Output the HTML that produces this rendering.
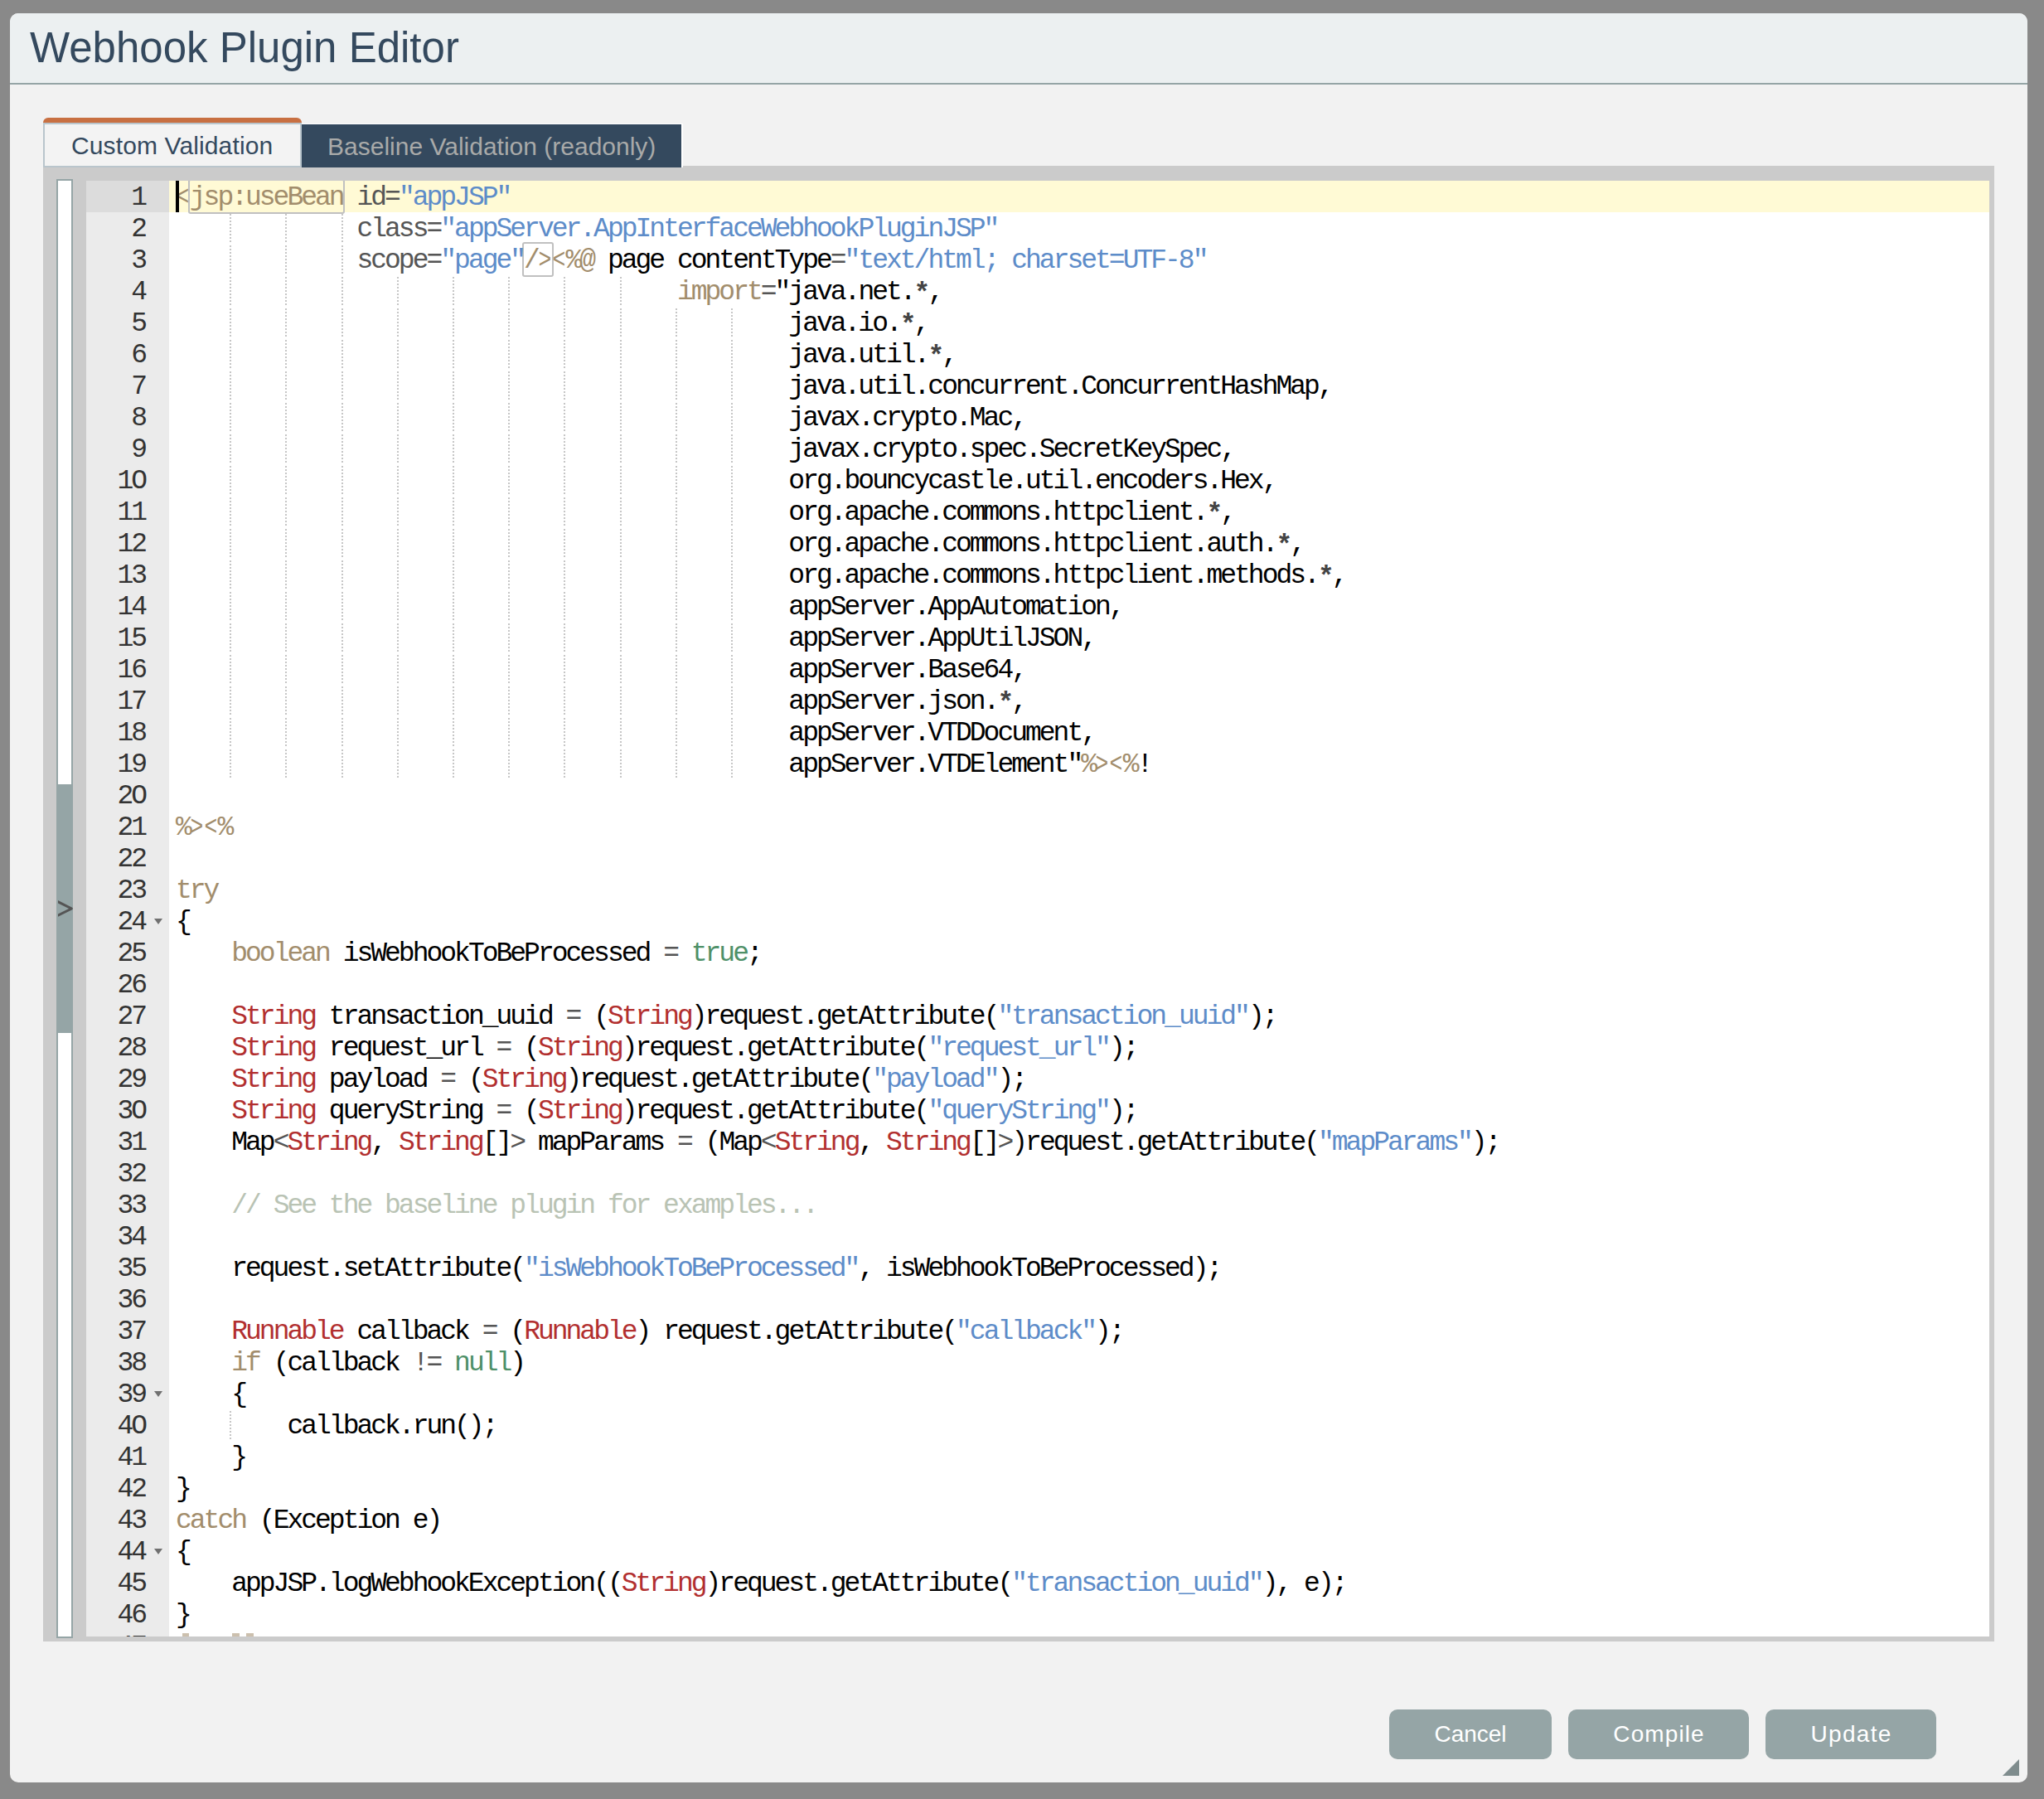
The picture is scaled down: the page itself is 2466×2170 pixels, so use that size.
<!DOCTYPE html>
<html><head><meta charset="utf-8"><title>Webhook Plugin Editor</title>
<style>
html,body{margin:0;padding:0}
body{width:2466px;height:2170px;background:#898989;position:relative;overflow:hidden;font-family:"Liberation Sans",sans-serif}
.abs{position:absolute}
#dlg{position:absolute;left:12px;top:16px;width:2434px;height:2134px;border-radius:10px;background:#f2f2f2;overflow:hidden}
#titlebar{position:absolute;left:0;top:0;width:2434px;height:84px;background:#ecf0f1;border-bottom:2px solid #95a5a6}
#title{position:absolute;left:24px;top:16px;font-size:51px;line-height:51px;color:#34495e;white-space:nowrap}
#tab1o{position:absolute;left:52px;top:142px;width:312px;height:60px;background:#c87042;border-radius:6px 6px 0 0;z-index:3}
#tab1i{position:absolute;left:0;top:6px;width:312px;height:54px;box-sizing:border-box;border:2px solid #b9c5cc;background:#f3f3f3}
#tab2{position:absolute;left:364px;top:149px;width:460px;height:53px;box-sizing:border-box;border-top:1px solid #fff;border-right:2px solid #fff;background:#34495e;z-index:2}
.tabt{position:absolute;font-size:30px;line-height:30px;white-space:nowrap}
#cont{position:absolute;left:52px;top:200px;width:2354px;height:1780px;background:#cbcbcb;z-index:1}
#split{position:absolute;left:68px;top:216px;width:20px;height:1760px;box-sizing:border-box;border:2px solid #95a5a6;background:#fff;z-index:2}
#splitfill{position:absolute;left:68px;top:946px;width:20px;height:300px;background:#95a5a6;z-index:3}
#arrow{position:absolute;left:68px;top:1082px;z-index:4}
#ed{position:absolute;left:104px;top:218px;width:2296px;height:1756px;overflow:hidden;background:#fff;z-index:2}
#gutter{position:absolute;left:0;top:0;width:100px;height:1756px;background:#ebebeb}
#gact{position:absolute;left:0;top:0;width:100px;height:38px;background:#dcdcdc}
.gc{position:absolute;left:0;width:71px;height:38px;padding-top:2px;text-align:right;font-family:"Liberation Mono",monospace;font-size:33px;line-height:38px;letter-spacing:-3px;color:#333}
.fw{position:absolute;left:82px;top:15.7px;width:0;height:0;border-left:5px solid transparent;border-right:5px solid transparent;border-top:7px solid #707070}
#content{position:absolute;left:100px;top:0;width:2196px;height:1756px;background:#fff}
#lact{position:absolute;left:0;top:0;width:2196px;height:38px;background:#fffad5}
.gd{position:absolute;width:2px;height:38px;background:repeating-linear-gradient(to bottom,transparent 0,transparent 2px,#c6c6c6 2px,#c6c6c6 4px)}
.brk{position:absolute;box-sizing:border-box;border:2px solid #c0c0c0;border-radius:3px}
#cursor{position:absolute;left:8px;top:0;width:4px;height:38px;background:#000;z-index:5}
.ln{position:absolute;left:8px;height:38px;font-family:"Liberation Mono",monospace;font-size:33px;line-height:38px;letter-spacing:-3px;white-space:pre;color:#000}
.t{color:#a28d6c}
.nar{display:inline-block;width:16.8px;letter-spacing:0;font-style:normal;text-indent:-1.5px;transform:scaleX(.8)}
.g{color:#555}
.s{color:#444;font-weight:bold;position:relative;top:2px}
.b{color:#5d8cc9}
.r{color:#b22f2f}
.n{color:#4e9068}
.c{color:#b9c3b4}
.btn{position:absolute;top:2046px;height:60px;border-radius:10px;background:#95a5a6;color:#fff;font-size:28px;line-height:60px;text-align:center;white-space:nowrap}
#grip{position:absolute;left:2404px;top:2106px;width:0;height:0;border-left:20px solid transparent;border-bottom:20px solid #7f8c8d}
</style></head>
<body>
<div id="dlg">
  <div id="titlebar"></div>
  <div id="title">Webhook Plugin Editor</div>
  <div class="btn" style="left:1664px;width:196px">Cancel</div>
  <div class="btn" style="left:1880px;width:218px;letter-spacing:1.1px;text-indent:1.1px">Compile</div>
  <div class="btn" style="left:2118px;width:206px;letter-spacing:1.3px;text-indent:1.3px">Update</div>
  <div id="grip"></div>
</div>
<div id="cont"></div>
<div id="tab1o"><div id="tab1i"></div><span class="tabt" id="t1" style="left:34px;top:19px;color:#34495e;letter-spacing:0.12px">Custom Validation</span></div>
<div id="tab2"><span class="tabt" id="t2" style="left:31px;top:12px;color:#a9aaa9">Baseline Validation (readonly)</span></div>
<div id="split"></div>
<div id="splitfill"></div>
<svg id="arrow" width="22" height="28" viewBox="0 0 22 28"><polygon points="2,4.1 19.2,12.7 20,13.95 19.2,15.2 2,23.8 2,20.5 15.1,13.95 2,7.4" fill="#555"/></svg>
<div id="ed">
  <div id="gutter">
    <div id="gact"></div>
<div class="gc" style="top:0px">1</div>
<div class="gc" style="top:38px">2</div>
<div class="gc" style="top:76px">3</div>
<div class="gc" style="top:114px">4</div>
<div class="gc" style="top:152px">5</div>
<div class="gc" style="top:190px">6</div>
<div class="gc" style="top:228px">7</div>
<div class="gc" style="top:266px">8</div>
<div class="gc" style="top:304px">9</div>
<div class="gc" style="top:342px">1O</div>
<div class="gc" style="top:380px">11</div>
<div class="gc" style="top:418px">12</div>
<div class="gc" style="top:456px">13</div>
<div class="gc" style="top:494px">14</div>
<div class="gc" style="top:532px">15</div>
<div class="gc" style="top:570px">16</div>
<div class="gc" style="top:608px">17</div>
<div class="gc" style="top:646px">18</div>
<div class="gc" style="top:684px">19</div>
<div class="gc" style="top:722px">2O</div>
<div class="gc" style="top:760px">21</div>
<div class="gc" style="top:798px">22</div>
<div class="gc" style="top:836px">23</div>
<div class="gc" style="top:874px">24<i class="fw"></i></div>
<div class="gc" style="top:912px">25</div>
<div class="gc" style="top:950px">26</div>
<div class="gc" style="top:988px">27</div>
<div class="gc" style="top:1026px">28</div>
<div class="gc" style="top:1064px">29</div>
<div class="gc" style="top:1102px">3O</div>
<div class="gc" style="top:1140px">31</div>
<div class="gc" style="top:1178px">32</div>
<div class="gc" style="top:1216px">33</div>
<div class="gc" style="top:1254px">34</div>
<div class="gc" style="top:1292px">35</div>
<div class="gc" style="top:1330px">36</div>
<div class="gc" style="top:1368px">37</div>
<div class="gc" style="top:1406px">38</div>
<div class="gc" style="top:1444px">39<i class="fw"></i></div>
<div class="gc" style="top:1482px">4O</div>
<div class="gc" style="top:1520px">41</div>
<div class="gc" style="top:1558px">42</div>
<div class="gc" style="top:1596px">43</div>
<div class="gc" style="top:1634px">44<i class="fw"></i></div>
<div class="gc" style="top:1672px">45</div>
<div class="gc" style="top:1710px">46</div>
<div class="gc" style="top:1748px">47</div>
  </div>
  <div id="content">
    <div id="lact"></div>
<div class="gd" style="left:73.2px;top:38px"></div>
<div class="gd" style="left:140.4px;top:38px"></div>
<div class="gd" style="left:207.6px;top:38px"></div>
<div class="gd" style="left:73.2px;top:76px"></div>
<div class="gd" style="left:140.4px;top:76px"></div>
<div class="gd" style="left:207.6px;top:76px"></div>
<div class="gd" style="left:73.2px;top:114px"></div>
<div class="gd" style="left:140.4px;top:114px"></div>
<div class="gd" style="left:207.6px;top:114px"></div>
<div class="gd" style="left:274.8px;top:114px"></div>
<div class="gd" style="left:342.0px;top:114px"></div>
<div class="gd" style="left:409.2px;top:114px"></div>
<div class="gd" style="left:476.4px;top:114px"></div>
<div class="gd" style="left:543.6px;top:114px"></div>
<div class="gd" style="left:73.2px;top:152px"></div>
<div class="gd" style="left:140.4px;top:152px"></div>
<div class="gd" style="left:207.6px;top:152px"></div>
<div class="gd" style="left:274.8px;top:152px"></div>
<div class="gd" style="left:342.0px;top:152px"></div>
<div class="gd" style="left:409.2px;top:152px"></div>
<div class="gd" style="left:476.4px;top:152px"></div>
<div class="gd" style="left:543.6px;top:152px"></div>
<div class="gd" style="left:610.8px;top:152px"></div>
<div class="gd" style="left:678.0px;top:152px"></div>
<div class="gd" style="left:73.2px;top:190px"></div>
<div class="gd" style="left:140.4px;top:190px"></div>
<div class="gd" style="left:207.6px;top:190px"></div>
<div class="gd" style="left:274.8px;top:190px"></div>
<div class="gd" style="left:342.0px;top:190px"></div>
<div class="gd" style="left:409.2px;top:190px"></div>
<div class="gd" style="left:476.4px;top:190px"></div>
<div class="gd" style="left:543.6px;top:190px"></div>
<div class="gd" style="left:610.8px;top:190px"></div>
<div class="gd" style="left:678.0px;top:190px"></div>
<div class="gd" style="left:73.2px;top:228px"></div>
<div class="gd" style="left:140.4px;top:228px"></div>
<div class="gd" style="left:207.6px;top:228px"></div>
<div class="gd" style="left:274.8px;top:228px"></div>
<div class="gd" style="left:342.0px;top:228px"></div>
<div class="gd" style="left:409.2px;top:228px"></div>
<div class="gd" style="left:476.4px;top:228px"></div>
<div class="gd" style="left:543.6px;top:228px"></div>
<div class="gd" style="left:610.8px;top:228px"></div>
<div class="gd" style="left:678.0px;top:228px"></div>
<div class="gd" style="left:73.2px;top:266px"></div>
<div class="gd" style="left:140.4px;top:266px"></div>
<div class="gd" style="left:207.6px;top:266px"></div>
<div class="gd" style="left:274.8px;top:266px"></div>
<div class="gd" style="left:342.0px;top:266px"></div>
<div class="gd" style="left:409.2px;top:266px"></div>
<div class="gd" style="left:476.4px;top:266px"></div>
<div class="gd" style="left:543.6px;top:266px"></div>
<div class="gd" style="left:610.8px;top:266px"></div>
<div class="gd" style="left:678.0px;top:266px"></div>
<div class="gd" style="left:73.2px;top:304px"></div>
<div class="gd" style="left:140.4px;top:304px"></div>
<div class="gd" style="left:207.6px;top:304px"></div>
<div class="gd" style="left:274.8px;top:304px"></div>
<div class="gd" style="left:342.0px;top:304px"></div>
<div class="gd" style="left:409.2px;top:304px"></div>
<div class="gd" style="left:476.4px;top:304px"></div>
<div class="gd" style="left:543.6px;top:304px"></div>
<div class="gd" style="left:610.8px;top:304px"></div>
<div class="gd" style="left:678.0px;top:304px"></div>
<div class="gd" style="left:73.2px;top:342px"></div>
<div class="gd" style="left:140.4px;top:342px"></div>
<div class="gd" style="left:207.6px;top:342px"></div>
<div class="gd" style="left:274.8px;top:342px"></div>
<div class="gd" style="left:342.0px;top:342px"></div>
<div class="gd" style="left:409.2px;top:342px"></div>
<div class="gd" style="left:476.4px;top:342px"></div>
<div class="gd" style="left:543.6px;top:342px"></div>
<div class="gd" style="left:610.8px;top:342px"></div>
<div class="gd" style="left:678.0px;top:342px"></div>
<div class="gd" style="left:73.2px;top:380px"></div>
<div class="gd" style="left:140.4px;top:380px"></div>
<div class="gd" style="left:207.6px;top:380px"></div>
<div class="gd" style="left:274.8px;top:380px"></div>
<div class="gd" style="left:342.0px;top:380px"></div>
<div class="gd" style="left:409.2px;top:380px"></div>
<div class="gd" style="left:476.4px;top:380px"></div>
<div class="gd" style="left:543.6px;top:380px"></div>
<div class="gd" style="left:610.8px;top:380px"></div>
<div class="gd" style="left:678.0px;top:380px"></div>
<div class="gd" style="left:73.2px;top:418px"></div>
<div class="gd" style="left:140.4px;top:418px"></div>
<div class="gd" style="left:207.6px;top:418px"></div>
<div class="gd" style="left:274.8px;top:418px"></div>
<div class="gd" style="left:342.0px;top:418px"></div>
<div class="gd" style="left:409.2px;top:418px"></div>
<div class="gd" style="left:476.4px;top:418px"></div>
<div class="gd" style="left:543.6px;top:418px"></div>
<div class="gd" style="left:610.8px;top:418px"></div>
<div class="gd" style="left:678.0px;top:418px"></div>
<div class="gd" style="left:73.2px;top:456px"></div>
<div class="gd" style="left:140.4px;top:456px"></div>
<div class="gd" style="left:207.6px;top:456px"></div>
<div class="gd" style="left:274.8px;top:456px"></div>
<div class="gd" style="left:342.0px;top:456px"></div>
<div class="gd" style="left:409.2px;top:456px"></div>
<div class="gd" style="left:476.4px;top:456px"></div>
<div class="gd" style="left:543.6px;top:456px"></div>
<div class="gd" style="left:610.8px;top:456px"></div>
<div class="gd" style="left:678.0px;top:456px"></div>
<div class="gd" style="left:73.2px;top:494px"></div>
<div class="gd" style="left:140.4px;top:494px"></div>
<div class="gd" style="left:207.6px;top:494px"></div>
<div class="gd" style="left:274.8px;top:494px"></div>
<div class="gd" style="left:342.0px;top:494px"></div>
<div class="gd" style="left:409.2px;top:494px"></div>
<div class="gd" style="left:476.4px;top:494px"></div>
<div class="gd" style="left:543.6px;top:494px"></div>
<div class="gd" style="left:610.8px;top:494px"></div>
<div class="gd" style="left:678.0px;top:494px"></div>
<div class="gd" style="left:73.2px;top:532px"></div>
<div class="gd" style="left:140.4px;top:532px"></div>
<div class="gd" style="left:207.6px;top:532px"></div>
<div class="gd" style="left:274.8px;top:532px"></div>
<div class="gd" style="left:342.0px;top:532px"></div>
<div class="gd" style="left:409.2px;top:532px"></div>
<div class="gd" style="left:476.4px;top:532px"></div>
<div class="gd" style="left:543.6px;top:532px"></div>
<div class="gd" style="left:610.8px;top:532px"></div>
<div class="gd" style="left:678.0px;top:532px"></div>
<div class="gd" style="left:73.2px;top:570px"></div>
<div class="gd" style="left:140.4px;top:570px"></div>
<div class="gd" style="left:207.6px;top:570px"></div>
<div class="gd" style="left:274.8px;top:570px"></div>
<div class="gd" style="left:342.0px;top:570px"></div>
<div class="gd" style="left:409.2px;top:570px"></div>
<div class="gd" style="left:476.4px;top:570px"></div>
<div class="gd" style="left:543.6px;top:570px"></div>
<div class="gd" style="left:610.8px;top:570px"></div>
<div class="gd" style="left:678.0px;top:570px"></div>
<div class="gd" style="left:73.2px;top:608px"></div>
<div class="gd" style="left:140.4px;top:608px"></div>
<div class="gd" style="left:207.6px;top:608px"></div>
<div class="gd" style="left:274.8px;top:608px"></div>
<div class="gd" style="left:342.0px;top:608px"></div>
<div class="gd" style="left:409.2px;top:608px"></div>
<div class="gd" style="left:476.4px;top:608px"></div>
<div class="gd" style="left:543.6px;top:608px"></div>
<div class="gd" style="left:610.8px;top:608px"></div>
<div class="gd" style="left:678.0px;top:608px"></div>
<div class="gd" style="left:73.2px;top:646px"></div>
<div class="gd" style="left:140.4px;top:646px"></div>
<div class="gd" style="left:207.6px;top:646px"></div>
<div class="gd" style="left:274.8px;top:646px"></div>
<div class="gd" style="left:342.0px;top:646px"></div>
<div class="gd" style="left:409.2px;top:646px"></div>
<div class="gd" style="left:476.4px;top:646px"></div>
<div class="gd" style="left:543.6px;top:646px"></div>
<div class="gd" style="left:610.8px;top:646px"></div>
<div class="gd" style="left:678.0px;top:646px"></div>
<div class="gd" style="left:73.2px;top:684px"></div>
<div class="gd" style="left:140.4px;top:684px"></div>
<div class="gd" style="left:207.6px;top:684px"></div>
<div class="gd" style="left:274.8px;top:684px"></div>
<div class="gd" style="left:342.0px;top:684px"></div>
<div class="gd" style="left:409.2px;top:684px"></div>
<div class="gd" style="left:476.4px;top:684px"></div>
<div class="gd" style="left:543.6px;top:684px"></div>
<div class="gd" style="left:610.8px;top:684px"></div>
<div class="gd" style="left:678.0px;top:684px"></div>
<div class="gd" style="left:73.2px;top:1482px"></div>
    <div class="brk" style="left:22.8px;top:-2px;width:188.8px;height:42px"></div>
    <div class="brk" style="left:426px;top:74px;width:37.6px;height:42px"></div>
<div class="ln" style="top:2.4px"><span class="t"><i class="nar">&lt;</i>jsp:useBean</span> <span class="g">id=</span><span class="b">&quot;appJSP&quot;</span></div>
<div class="ln" style="top:40.4px">             <span class="g">class=</span><span class="b">&quot;appServer.AppInterfaceWebhookPluginJSP&quot;</span></div>
<div class="ln" style="top:78.4px">             <span class="g">scope=</span><span class="b">&quot;page&quot;</span><span class="t">/<i class="nar">&gt;</i></span><span class="t"><i class="nar">&lt;</i>%@</span> page contentType<span class="g">=</span><span class="b">&quot;text/html; charset=UTF-8&quot;</span></div>
<div class="ln" style="top:116.4px">                                    <span class="t">import</span><span class="g">=</span>&quot;java.net.<span class="s">*</span>,</div>
<div class="ln" style="top:154.4px">                                            java.io.<span class="s">*</span>,</div>
<div class="ln" style="top:192.4px">                                            java.util.<span class="s">*</span>,</div>
<div class="ln" style="top:230.4px">                                            java.util.concurrent.ConcurrentHashMap,</div>
<div class="ln" style="top:268.4px">                                            javax.crypto.Mac,</div>
<div class="ln" style="top:306.4px">                                            javax.crypto.spec.SecretKeySpec,</div>
<div class="ln" style="top:344.4px">                                            org.bouncycastle.util.encoders.Hex,</div>
<div class="ln" style="top:382.4px">                                            org.apache.commons.httpclient.<span class="s">*</span>,</div>
<div class="ln" style="top:420.4px">                                            org.apache.commons.httpclient.auth.<span class="s">*</span>,</div>
<div class="ln" style="top:458.4px">                                            org.apache.commons.httpclient.methods.<span class="s">*</span>,</div>
<div class="ln" style="top:496.4px">                                            appServer.AppAutomation,</div>
<div class="ln" style="top:534.4px">                                            appServer.AppUtilJSON,</div>
<div class="ln" style="top:572.4px">                                            appServer.Base64,</div>
<div class="ln" style="top:610.4px">                                            appServer.json.<span class="s">*</span>,</div>
<div class="ln" style="top:648.4px">                                            appServer.VTDDocument,</div>
<div class="ln" style="top:686.4px">                                            appServer.VTDElement&quot;<span class="t">%<i class="nar">&gt;</i><i class="nar">&lt;</i>%</span>!</div>
<div class="ln" style="top:724.4px"></div>
<div class="ln" style="top:762.4px"><span class="t">%<i class="nar">&gt;</i><i class="nar">&lt;</i>%</span></div>
<div class="ln" style="top:800.4px"></div>
<div class="ln" style="top:838.4px"><span class="t">try</span></div>
<div class="ln" style="top:876.4px">{</div>
<div class="ln" style="top:914.4px">    <span class="t">boolean</span> isWebhookToBeProcessed <span class="g">=</span> <span class="n">true</span>;</div>
<div class="ln" style="top:952.4px"></div>
<div class="ln" style="top:990.4px">    <span class="r">String</span> transaction_uuid <span class="g">=</span> (<span class="r">String</span>)request.getAttribute(<span class="b">&quot;transaction_uuid&quot;</span>);</div>
<div class="ln" style="top:1028.4px">    <span class="r">String</span> request_url <span class="g">=</span> (<span class="r">String</span>)request.getAttribute(<span class="b">&quot;request_url&quot;</span>);</div>
<div class="ln" style="top:1066.4px">    <span class="r">String</span> payload <span class="g">=</span> (<span class="r">String</span>)request.getAttribute(<span class="b">&quot;payload&quot;</span>);</div>
<div class="ln" style="top:1104.4px">    <span class="r">String</span> queryString <span class="g">=</span> (<span class="r">String</span>)request.getAttribute(<span class="b">&quot;queryString&quot;</span>);</div>
<div class="ln" style="top:1142.4px">    Map<span class="g">&lt;</span><span class="r">String</span>, <span class="r">String</span>[]<span class="g">&gt;</span> mapParams <span class="g">=</span> (Map<span class="g">&lt;</span><span class="r">String</span>, <span class="r">String</span>[]<span class="g">&gt;</span>)request.getAttribute(<span class="b">&quot;mapParams&quot;</span>);</div>
<div class="ln" style="top:1180.4px"></div>
<div class="ln" style="top:1218.4px">    <span class="c">// See the baseline plugin for examples...</span></div>
<div class="ln" style="top:1256.4px"></div>
<div class="ln" style="top:1294.4px">    request.setAttribute(<span class="b">&quot;isWebhookToBeProcessed&quot;</span>, isWebhookToBeProcessed);</div>
<div class="ln" style="top:1332.4px"></div>
<div class="ln" style="top:1370.4px">    <span class="r">Runnable</span> callback <span class="g">=</span> (<span class="r">Runnable</span>) request.getAttribute(<span class="b">&quot;callback&quot;</span>);</div>
<div class="ln" style="top:1408.4px">    <span class="t">if</span> (callback <span class="g">!=</span> <span class="n">null</span>)</div>
<div class="ln" style="top:1446.4px">    {</div>
<div class="ln" style="top:1484.4px">        callback.run();</div>
<div class="ln" style="top:1522.4px">    }</div>
<div class="ln" style="top:1560.4px">}</div>
<div class="ln" style="top:1598.4px"><span class="t">catch</span> (Exception e)</div>
<div class="ln" style="top:1636.4px">{</div>
<div class="ln" style="top:1674.4px">    appJSP.logWebhookException((<span class="r">String</span>)request.getAttribute(<span class="b">&quot;transaction_uuid&quot;</span>), e);</div>
<div class="ln" style="top:1712.4px">}</div>
<div class="ln" style="top:1750.4px"></div>
    <div id="cursor"></div>
    <div class="abs" style="left:16px;top:1752px;width:8px;height:4px;background:#a28d6c;opacity:.55"></div>
    <div class="abs" style="left:76px;top:1752px;width:9px;height:4px;background:#a28d6c;opacity:.55"></div>
    <div class="abs" style="left:93px;top:1752px;width:9px;height:4px;background:#a28d6c;opacity:.55"></div>
  </div>
</div>
</body></html>
